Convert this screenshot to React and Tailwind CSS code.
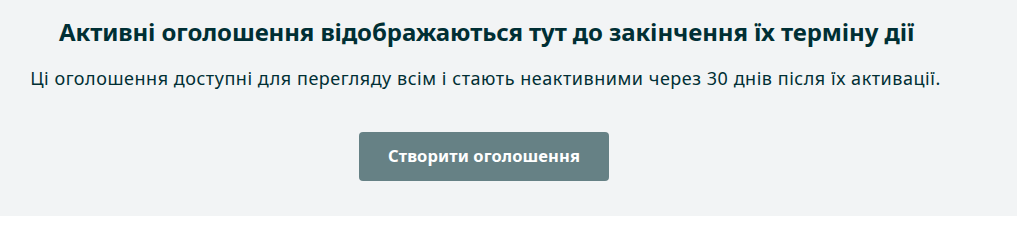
export default function App() {
  return (
    <div className="w-[1017px] h-[216px] bg-[#f2f4f5]" style={{ fontFamily: '"Noto Sans", sans-serif' }}>
      <div className="w-[973px] flex flex-col items-center pt-[16px]">
        <h2 className="text-[24px] leading-[32px] font-bold text-[#002f34] tracking-[-0.1px]">
          Активні оголошення відображаються тут до закінчення їх терміну дії
        </h2>
        <p className="mt-[18px] mr-[2px] text-[18px] leading-[24px] text-[#002f34] tracking-[0.53px]">
          Ці оголошення доступні для перегляду всім і стають неактивними через 30 днів після їх активації.
        </p>
        <button className="mt-[42px] mr-[5px] w-[250px] h-[49px] rounded-[4px] bg-[#668185] text-white text-[16.5px] font-bold tracking-[0.1px]">
          Створити оголошення
        </button>
      </div>
    </div>
  );
}
